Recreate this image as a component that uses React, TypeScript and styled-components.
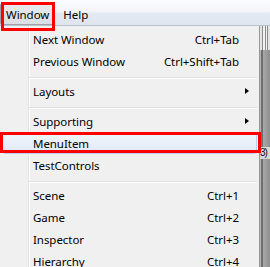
import React from "react";
import styled, { createGlobalStyle, css } from "styled-components";

const GlobalStyle = createGlobalStyle`
  html, body {
    margin: 0;
    padding: 0;
    width: 270px;
    height: 267px;
    overflow: hidden;
    background: #f0f0f0;
  }
  #root { width: 270px; height: 267px; }
`;

const Screen = styled.div`
  width: 270px;
  height: 267px;
  overflow: hidden;
  display: grid;
  grid-template-rows: 26px 1fr;
  font-family: "Noto Sans", "Open Sans", sans-serif;
  font-size: 11.5px;
  letter-spacing: -0.05px;
  color: #000;
`;

const MenuBar = styled.div`
  position: relative;
  z-index: 2;
  display: flex;
  gap: 2px;
  align-items: flex-start;
  padding-top: 3px;
  box-sizing: border-box;
  height: 26px;
  background: linear-gradient(#fbfcfd 0%, #f3f5f8 45%, #e3e9f1 55%, #dde5ef 100%);
  border-bottom: 1px solid #b9c2cd;
`;

const BarItem = styled.div<{ $pressed?: boolean }>`
  position: relative;
  height: 22px;
  line-height: 21px;
  padding: 0 5px;
  box-sizing: border-box;
  border: 1px solid transparent;
  border-radius: 2px;
  ${(p) =>
    p.$pressed &&
    css`
      border-color: #9ea3a9;
      background: linear-gradient(#e8eaed, #dcdfe3);
    `}
`;

const Annotation = styled.div<{ $t: number; $r: number; $b: number; $l: number }>`
  position: absolute;
  top: ${(p) => p.$t}px;
  right: ${(p) => p.$r}px;
  bottom: ${(p) => p.$b}px;
  left: ${(p) => p.$l}px;
  border: 3px solid #ff0000;
  pointer-events: none;
  z-index: 5;
`;

const Body = styled.div`
  display: flex;
  min-height: 0;
`;

const Dropdown = styled.div`
  position: relative;
  width: 260px;
  flex: none;
  box-sizing: border-box;
  padding-top: 2px;
  border-right: 1px solid #979797;
  background-color: #f0f0f0;
  background-image: linear-gradient(
    to right,
    transparent 28px,
    #e2e3e3 28px,
    #e2e3e3 29px,
    #ffffff 29px,
    #ffffff 30px,
    transparent 30px
  );
`;

const Row = styled.div<{ $active?: boolean }>`
  position: relative;
  display: grid;
  grid-template-columns: 1fr auto 17px;
  align-items: center;
  height: 22px;
  margin: 0 2px;
  padding-left: 30px;
  box-sizing: border-box;
  border: 1px solid transparent;
  border-radius: 3px;
  white-space: nowrap;
  ${(p) =>
    p.$active &&
    css`
      border-color: #b6d2f2;
      background: linear-gradient(#f2f6fb, #e0e9f5);
    `}
`;

const Label = styled.span``;

const Shortcut = styled.span`
  text-align: right;
`;

const Arrow = styled.span`
  justify-self: start;
  margin-left: 6px;
  width: 0;
  height: 0;
  border-top: 3.5px solid transparent;
  border-bottom: 3.5px solid transparent;
  border-left: 4px solid #000;
`;

const Separator = styled.div`
  height: 8px;
  margin: 0 2px 0 29px;
  background: linear-gradient(
    to bottom,
    transparent 5px,
    #e0e0e0 5px,
    #e0e0e0 6px,
    #ffffff 6px,
    #ffffff 7px,
    transparent 7px
  );
`;

const Behind = styled.div`
  flex: 1;
  min-width: 0;
  display: flex;
  flex-direction: column;
  background: linear-gradient(to right, #b4b4b4 0 1px, #6e6e6e 1px 3px, #a9a9a9 3px, #8e8e8e 100%);
`;

const BehindToolbar = styled.div`
  height: 24px;
  background: linear-gradient(
    to right,
    #e4e4e4 0 2px,
    #8a8a8a 2px 3px,
    #f2f2f2 3px 5px,
    #8a8a8a 5px 6px,
    #f2f2f2 6px 7px,
    #8a8a8a 7px 8px,
    #e4e4e4 8px
  );
`;

const BehindText = styled.div`
  margin-top: 97px;
  height: 12px;
  line-height: 12px;
  font-family: "Liberation Sans", sans-serif;
  font-size: 10px;
  letter-spacing: -1px;
  background: #d9d9d9;
  color: #111;
  white-space: nowrap;
`;

type Item =
  | { kind: "item"; label: string; shortcut?: string; sub?: boolean; active?: boolean }
  | { kind: "sep" };

const items: Item[] = [
  { kind: "item", label: "Next Window", shortcut: "Ctrl+Tab" },
  { kind: "item", label: "Previous Window", shortcut: "Ctrl+Shift+Tab" },
  { kind: "sep" },
  { kind: "item", label: "Layouts", sub: true },
  { kind: "sep" },
  { kind: "item", label: "Supporting", sub: true },
  { kind: "item", label: "MenuItem", active: true },
  { kind: "item", label: "TestControls" },
  { kind: "sep" },
  { kind: "item", label: "Scene", shortcut: "Ctrl+1" },
  { kind: "item", label: "Game", shortcut: "Ctrl+2" },
  { kind: "item", label: "Inspector", shortcut: "Ctrl+3" },
  { kind: "item", label: "Hierarchy", shortcut: "Ctrl+4" },
];

export default function App() {
  return (
    <>
      <GlobalStyle />
      <Screen>
        <MenuBar>
          <BarItem $pressed>
            Window
            <Annotation $t={-2} $r={-1} $b={-7} $l={0} />
          </BarItem>
          <BarItem>Help</BarItem>
        </MenuBar>
        <Body>
          <Dropdown>
            {items.map((it, i) =>
              it.kind === "sep" ? (
                <Separator key={i} />
              ) : (
                <Row key={i} $active={it.active}>
                  <Label>{it.label}</Label>
                  <Shortcut>{it.shortcut ?? ""}</Shortcut>
                  {it.sub ? <Arrow /> : <span />}
                  {it.active && <Annotation $t={-1} $r={-5} $b={0} $l={-3} />}
                </Row>
              )
            )}
          </Dropdown>
          <Behind>
            <BehindToolbar />
            <BehindText>3)</BehindText>
          </Behind>
        </Body>
      </Screen>
    </>
  );
}
